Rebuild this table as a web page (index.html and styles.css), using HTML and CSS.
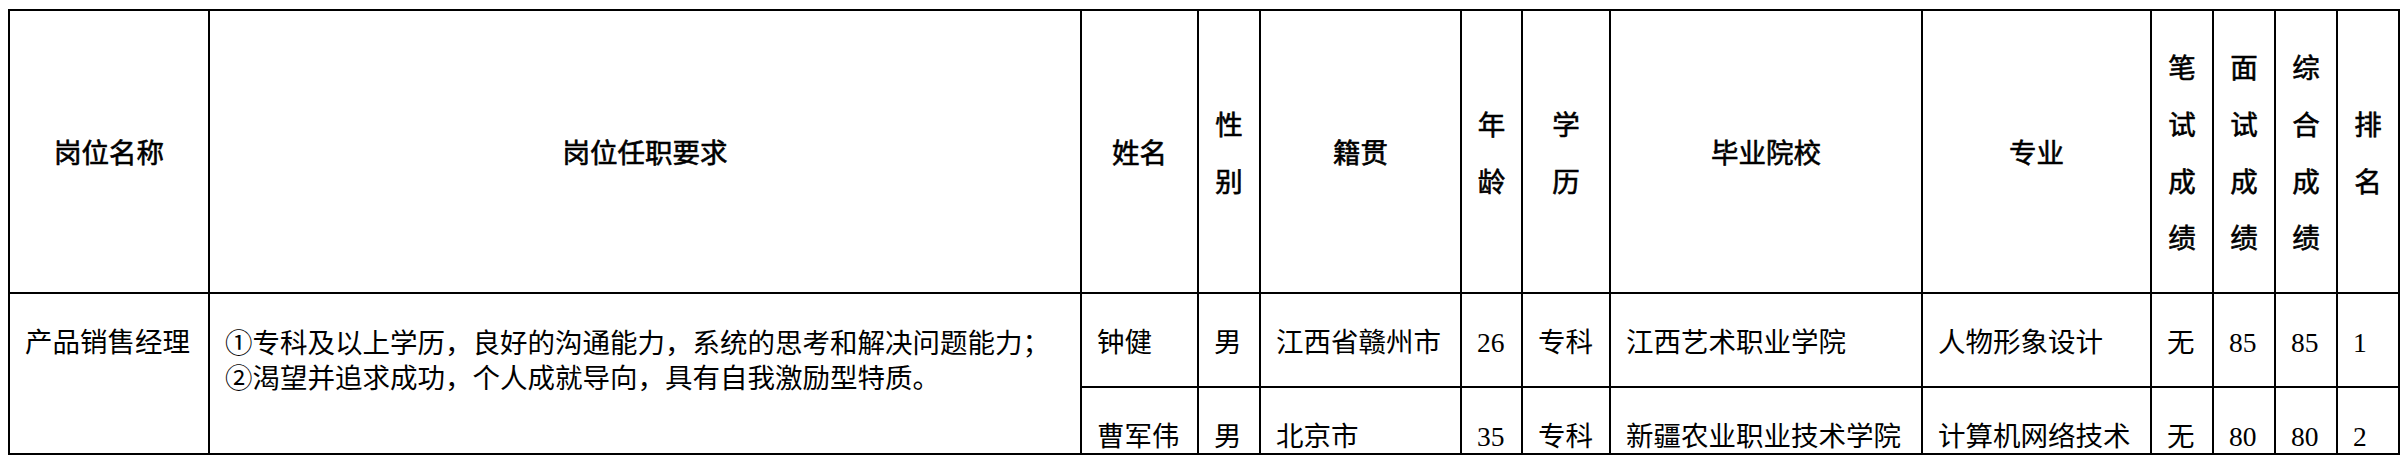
FILE: index.html
```html
<!DOCTYPE html>
<html lang="zh-CN">
<head>
<meta charset="utf-8">
<title>岗位招聘成绩表</title>
<link rel="stylesheet" href="styles.css">
</head>
<body>
<table class="grid">
  <thead>
    <tr class="head-row">
      <th class="c-post">岗位名称</th>
      <th class="c-req">岗位任职要求</th>
      <th class="c-name">姓名</th>
      <th class="c-sex">性<br>别</th>
      <th class="c-origin">籍贯</th>
      <th class="c-age">年<br>龄</th>
      <th class="c-edu">学<br>历</th>
      <th class="c-school">毕业院校</th>
      <th class="c-major">专业</th>
      <th class="c-score">笔<br>试<br>成<br>绩</th>
      <th class="c-score">面<br>试<br>成<br>绩</th>
      <th class="c-score">综<br>合<br>成<br>绩</th>
      <th class="c-rank">排<br>名</th>
    </tr>
  </thead>
  <tbody>
    <tr class="row-a">
      <td rowspan="2">产品销售经理</td>
      <td rowspan="2" class="req">①专科及以上学历，良好的沟通能力，系统的思考和解决问题能力；<br>②渴望并追求成功，个人成就导向，具有自我激励型特质。</td>
      <td>钟健</td>
      <td>男</td>
      <td>江西省赣州市</td>
      <td>26</td>
      <td>专科</td>
      <td>江西艺术职业学院</td>
      <td>人物形象设计</td>
      <td>无</td>
      <td>85</td>
      <td>85</td>
      <td>1</td>
    </tr>
    <tr class="row-b">
      <td>曹军伟</td>
      <td>男</td>
      <td>北京市</td>
      <td>35</td>
      <td>专科</td>
      <td>新疆农业职业技术学院</td>
      <td>计算机网络技术</td>
      <td>无</td>
      <td>80</td>
      <td>80</td>
      <td>2</td>
    </tr>
  </tbody>
</table>
</body>
</html>
```

FILE: styles.css
```css
html, body {
  background: #ffffff;
}

body {
  margin: 0;
  padding: 9px 8px 0;
  font-family: "Liberation Serif", "Noto Sans CJK SC", serif;
  font-size: 27.5px;
  color: #000000;
}

.grid {
  box-sizing: border-box;
  width: 2392px;
  table-layout: fixed;
  border-collapse: separate;
  border-spacing: 0;
  border-top: 2px solid #000000;
  border-left: 2px solid #000000;
}

.grid th,
.grid td {
  box-sizing: border-box;
  border-right: 2px solid #000000;
  border-bottom: 2px solid #000000;
  padding: 0 15px;
  white-space: nowrap;
}

.grid th {
  height: 283px;
  padding-top: 6px;
  font-weight: normal;
  -webkit-text-stroke: 0.6px #000000;
  text-align: center;
  vertical-align: middle;
  line-height: 56.7px;
}

.grid td {
  font-weight: normal;
  text-align: left;
  vertical-align: top;
  line-height: 30px;
  padding-top: 34px;
}

.row-a td {
  height: 94px;
}

.row-b td {
  height: 67px;
}

.grid td.req {
  line-height: 35px;
  padding-top: 32px;
}

.c-post { width: 200px; }
.c-req { width: 872px; }
.c-name { width: 117px; }
.c-sex { width: 62px; }
.c-origin { width: 201px; }
.c-age { width: 61px; }
.c-edu { width: 88px; }
.c-school { width: 312px; }
.c-major { width: 229px; }
.c-score { width: 62px; }
.c-rank { width: 62px; }
```
